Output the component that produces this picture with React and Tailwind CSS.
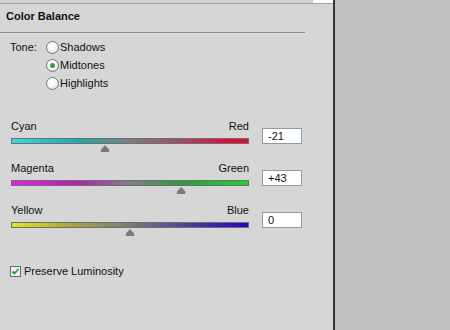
import React from "react";

const sliders = [
  { left: "Cyan", right: "Red", value: -21, bar: "bg-[linear-gradient(to_right,#3ad8d8_0%,#1ea8a8_30%,#7e7e7e_50%,#a0506a_70%,#d8103a_90%,#e01036_100%)]" },
  { left: "Magenta", right: "Green", value: 43, bar: "bg-[linear-gradient(to_right,#e224e2_0%,#b420b4_28%,#828082_50%,#2e9a40_72%,#20d62a_100%)]" },
  { left: "Yellow", right: "Blue", value: 0, bar: "bg-[linear-gradient(to_right,#e4e41c_0%,#a8a83c_25%,#7c7a78_50%,#4c3c9c_75%,#3000c8_100%)]" },
];

function Radio({ label, checked }) {
  return (
    <div className="flex h-[18px] items-center">
      <div className="flex h-[13px] w-[13px] items-center justify-center rounded-full border border-[#6b7886] bg-[radial-gradient(circle_at_40%_35%,#ffffff_0%,#f2f2f2_55%,#cfd3d8_100%)]">
        {checked && <div className="h-[5px] w-[5px] rounded-full bg-[#2fa43a]" />}
      </div>
      <span className="ml-px">{label}</span>
    </div>
  );
}

function Slider({ left, right, value, bar }) {
  const pos = ((value + 100) / 200) * 238;
  const text = value > 0 ? `+${value}` : `${value}`;
  return (
    <div className="flex h-[42px]">
      <div className="ml-[11px] flex w-[238px] flex-col">
        <div className="flex h-[14px] justify-between leading-[14px]">
          <span>{left}</span>
          <span>{right}</span>
        </div>
        <div className={`mt-[5px] h-[6px] border border-[#6e6e6e] ${bar}`} />
        <div className="relative h-[8px]">
          <div
            className="absolute top-[1px] h-[7px] w-[9px] -translate-x-1/2 rounded-t-[5px] bg-[#7a7a7a] [clip-path:polygon(50%_0,100%_70%,100%_100%,0_100%,0_70%)]"
            style={{ left: pos }}
          />
        </div>
      </div>
      <div className="ml-[13px] mt-[9px] flex h-[16px] w-[40px] items-center border border-[#8f9ba6] bg-white pl-[5px] text-[11px]">
        {text}
      </div>
    </div>
  );
}

export default function App() {
  return (
    <div className="flex h-[330px] w-[450px] text-[11px] text-[#111] [font-family:'Liberation_Sans',Arial,sans-serif]">
      <div className="flex w-[333px] flex-col bg-[#d6d6d6]">
        <div className="flex h-[3px] bg-[#d2d2d2]">
          <div className="flex-1" />
          <div className="w-[20px] bg-white" />
        </div>
        <div className="h-px bg-[#a4a4a4]" />
        <div className="ml-[6px] mt-[5px] text-[11px] font-bold leading-[14px]">Color Balance</div>
        <div className="mt-[9px] h-px w-[305px] bg-[#8a8a8a]" />
        <div className="h-px w-[305px] bg-[#e2e2e2]" />
        <div className="ml-[10px] mt-[4px] flex">
          <span className="w-[36px] leading-[18px]">Tone:</span>
          <div className="flex flex-col">
            <Radio label="Shadows" />
            <Radio label="Midtones" checked />
            <Radio label="Highlights" />
          </div>
        </div>
        <div className="mt-[27px] flex flex-col">
          {sliders.map((s) => (
            <Slider key={s.left} {...s} />
          ))}
        </div>
        <div className="ml-[10px] mt-[18px] flex items-center">
          <div className="flex h-[11px] w-[11px] items-center justify-center border border-[#54708a] bg-[#f1f1e4]">
            <svg width="9" height="9" viewBox="0 0 9 9">
              <path d="M1.5 4.5 L3.5 6.5 L7.5 2" fill="none" stroke="#25a02a" strokeWidth="1.8" />
            </svg>
          </div>
          <span className="ml-[3px]">Preserve Luminosity</span>
        </div>
      </div>
      <div className="w-[2px] bg-[#363636]" />
      <div className="flex-1 bg-[#c0c0c0]" />
    </div>
  );
}
